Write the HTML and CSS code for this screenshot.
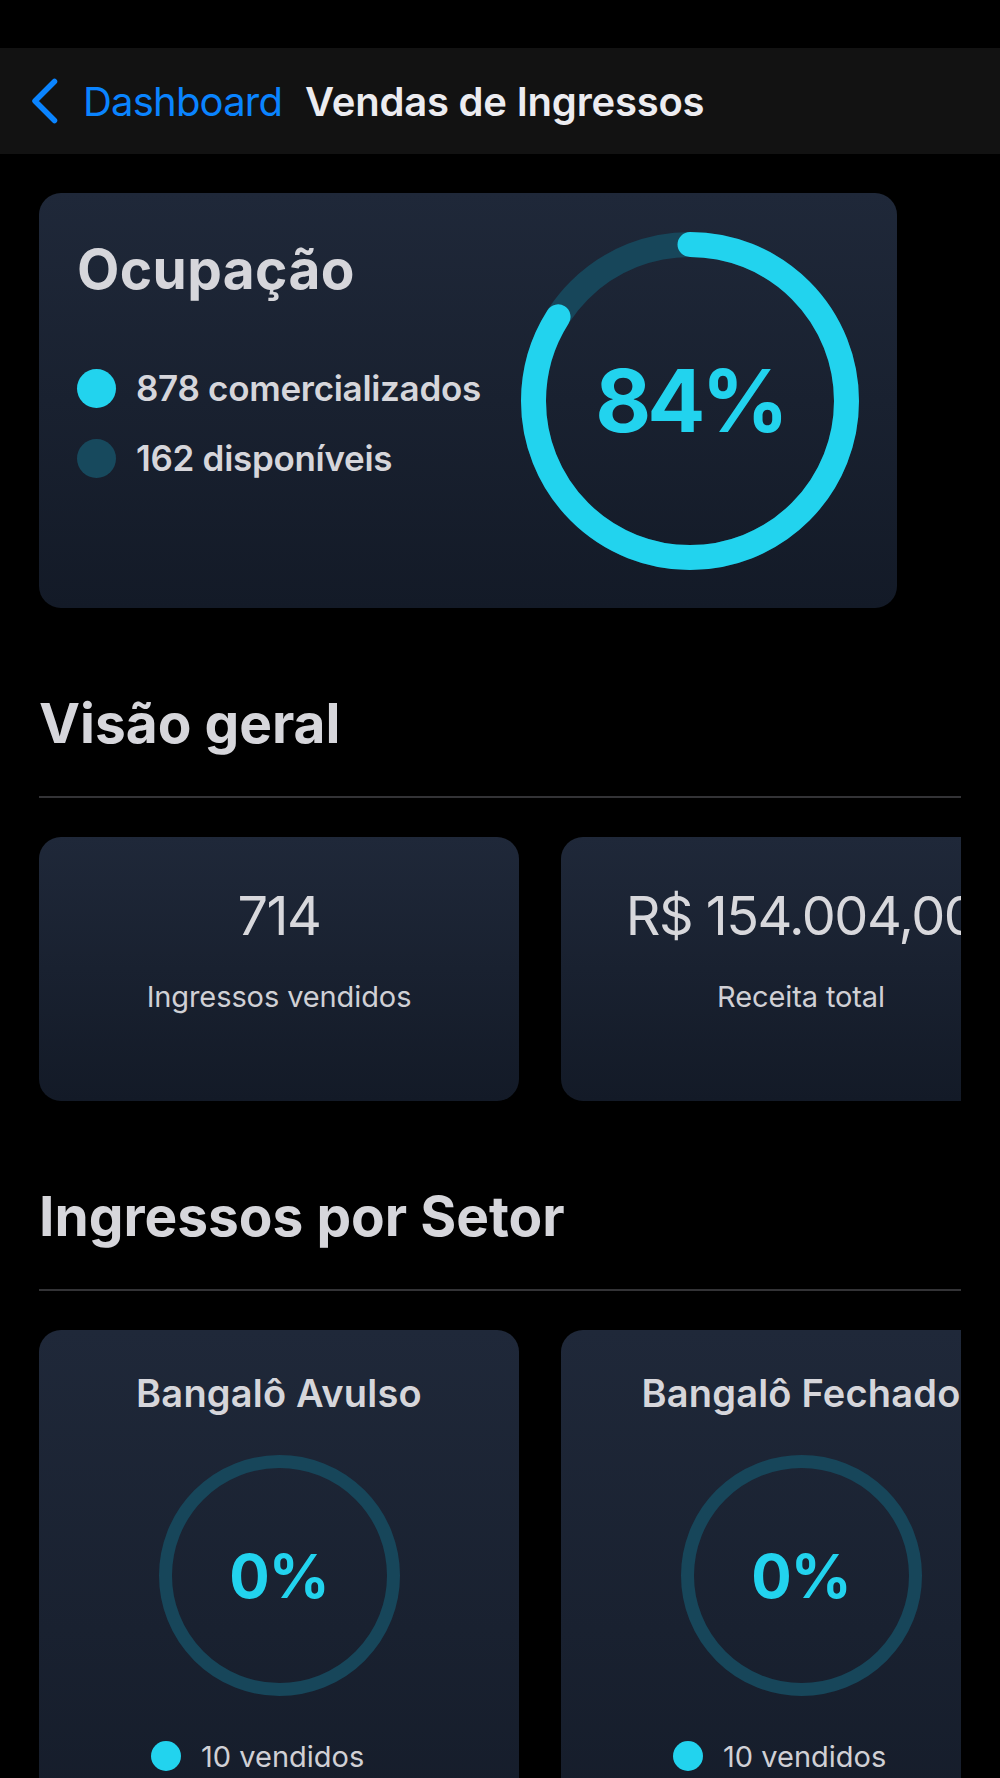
FILE: index.html
```html
<!DOCTYPE html>
<html lang="pt-BR">
<head>
  <meta charset="UTF-8" />
  <meta name="viewport" content="width=device-width, initial-scale=1.0" />
  <title>Vendas de Ingressos</title>
  <link rel="stylesheet" href="styles.css">
</head>
<body>
  <div class="status-bar"></div>

  <nav class="nav-bar">
    <a class="back-btn" href="#">
      <svg class="chevron" width="28" height="46" viewBox="0 0 28 46">
        <path d="M24.5 3.5 L5 23 L24.5 42.5" fill="none" stroke="#0a84ff" stroke-width="5.5" stroke-linecap="round" stroke-linejoin="round" />
      </svg>
      <span>Dashboard</span>
    </a>
    <span class="nav-title">Vendas de Ingressos</span>
  </nav>

  <main class="page">
    <section class="card occupancy">
      <div class="occupancy-info">
        <h2 class="occupancy-title">Ocupação</h2>
        <ul class="legend">
          <li><span class="dot dot-sold"></span>878 comercializados</li>
          <li><span class="dot dot-free"></span>162 disponíveis</li>
        </ul>
      </div>
      <div class="ring ring-big">
        <svg width="338" height="338" viewBox="0 0 338 338">
          <circle cx="169" cy="169" r="156.5" class="ring-track" stroke-width="25" />
          <!-- 84% de 983.3 -->
          <circle cx="169" cy="169" r="156.5" class="ring-value" stroke-width="25"
                  stroke-dasharray="826 983.3" transform="rotate(-90 169 169)" />
        </svg>
        <span class="ring-label">84%</span>
      </div>
    </section>

    <h2 class="section-title">Visão geral</h2>
    <hr class="divider" />
    <div class="scroller">
      <div class="card stat-card">
        <span class="stat-value">714</span>
        <span class="stat-label">Ingressos vendidos</span>
      </div>
      <div class="card stat-card">
        <span class="stat-value">R$ 154.004,00</span>
        <span class="stat-label">Receita total</span>
      </div>
    </div>

    <h2 class="section-title">Ingressos por Setor</h2>
    <hr class="divider" />
    <div class="scroller">
      <div class="card sector-card">
        <h3 class="sector-name">Bangalô Avulso</h3>
        <div class="ring ring-small">
          <svg width="241" height="241" viewBox="0 0 241 241">
            <circle cx="120.5" cy="120.5" r="114" class="ring-track" stroke-width="13" />
          </svg>
          <span class="ring-label">0%</span>
        </div>
        <ul class="sector-legend">
          <li><span class="dot dot-sm dot-sold"></span>10 vendidos</li>
        </ul>
      </div>
      <div class="card sector-card">
        <h3 class="sector-name">Bangalô Fechado</h3>
        <div class="ring ring-small">
          <svg width="241" height="241" viewBox="0 0 241 241">
            <circle cx="120.5" cy="120.5" r="114" class="ring-track" stroke-width="13" />
          </svg>
          <span class="ring-label">0%</span>
        </div>
        <ul class="sector-legend">
          <li><span class="dot dot-sm dot-sold"></span>10 vendidos</li>
        </ul>
      </div>
    </div>
  </main>
</body>
</html>
```

FILE: styles.css
```css
body {
  margin: 0;
  background: #000;
  color: #d6d6db;
  font-family: Inter, "Noto Sans", sans-serif;
  overflow: hidden;
}
.status-bar {
  height: 48px;
}
.nav-bar {
  height: 106px;
  background-color: #121212;
  display: flex;
  align-items: center;
  padding-left: 30px;
  font-size: 40px;
  letter-spacing: -0.8px;
}
.back-btn {
  display: flex;
  align-items: center;
  color: #0a84ff;
  text-decoration: none;
}
.chevron {
  margin-right: 25px;
}
.nav-title {
  margin-left: 23px;
  font-weight: 600;
  letter-spacing: -0.2px;
  color: #ececf0;
}
.page {
  padding: 0 39px;
}
.card {
  background: linear-gradient(180deg, #1f2839 0%, #131a27 100%);
  border-radius: 22px;
  box-sizing: border-box;
}
.occupancy {
  width: 858px;
  height: 415px;
  margin-top: 39px;
  padding: 38px 38px 38px 38px;
  display: flex;
  justify-content: space-between;
}
.occupancy-info {
  padding-top: 6px;
}
.occupancy-title,
.section-title {
  margin: 0;
  font-size: 55px;
  line-height: 64px;
  font-weight: 700;
  letter-spacing: 0;
  color: #d6d6db;
}
.occupancy-title {
  letter-spacing: 0.4px;
}
.legend {
  list-style: none;
  margin: 62px 0 0;
  padding: 0;
  display: flex;
  flex-direction: column;
  gap: 20px;
}
.legend li {
  display: flex;
  align-items: center;
  height: 50px;
  font-size: 35px;
  font-weight: 600;
  letter-spacing: -0.3px;
}
.dot {
  width: 39px;
  height: 39px;
  border-radius: 50%;
  margin-right: 20px;
  flex-shrink: 0;
}
.dot-sold {
  background-color: #22d3ee;
}
.dot-free {
  background-color: #17495d;
}
.ring {
  display: grid;
  place-items: center;
}
.ring svg,
.ring-label {
  grid-area: 1 / 1;
}
.ring-track {
  fill: none;
  stroke: #17465a;
}
.ring-value {
  fill: none;
  stroke: #22d3ee;
  stroke-linecap: round;
}
.ring-label {
  color: #22d3ee;
  font-weight: 700;
  line-height: 1;
}
.ring-big .ring-label {
  font-size: 86px;
  letter-spacing: -4px;
}
.ring-small .ring-label {
  font-size: 60px;
  letter-spacing: -1px;
}
.section-title {
  margin-top: 83px;
}
.divider {
  margin: 41px 0 0;
  border: none;
  height: 2px;
  background-color: #333336;
}
.scroller {
  margin-top: 39px;
  display: flex;
  gap: 42px;
  overflow: hidden;
}
.stat-card {
  flex: 0 0 480px;
  height: 264px;
  padding-top: 47px;
  display: flex;
  flex-direction: column;
  align-items: center;
}
.stat-value {
  font-size: 54px;
  line-height: 64px;
  font-weight: 400;
  letter-spacing: -1.5px;
  white-space: nowrap;
  color: #d8d8dc;
}
.stat-label {
  margin-top: 31px;
  font-size: 29px;
  line-height: 36px;
  letter-spacing: -0.1px;
  color: #d0d0d5;
}
.sector-card {
  flex: 0 0 480px;
  height: 600px;
  padding-top: 41px;
  display: flex;
  flex-direction: column;
  align-items: center;
}
.sector-name {
  margin: 0;
  font-size: 38px;
  line-height: 44px;
  font-weight: 600;
  letter-spacing: 0.2px;
  white-space: nowrap;
  color: #d6d6db;
}
.ring-small {
  margin-top: 40px;
}
.sector-legend {
  list-style: none;
  width: 256px;
  margin: 42px 0 0;
  padding: 0;
}
.sector-legend li {
  display: flex;
  align-items: center;
  height: 36px;
  font-size: 29px;
  color: #d0d0d5;
}
.dot-sm {
  width: 30px;
  height: 30px;
}
```
